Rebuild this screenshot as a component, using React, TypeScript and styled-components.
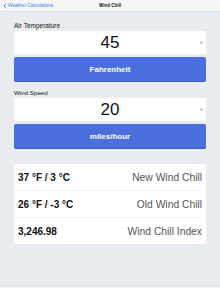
import React from "react"
import styled, { createGlobalStyle } from "styled-components"

const GlobalStyle = createGlobalStyle`
  html, body {
    margin: 0;
    padding: 0;
    background: #e9edf1;
    font-family: "Liberation Sans", Arial, sans-serif;
  }
`

const Screen = styled.div`
  width: 220px;
  height: 288px;
  display: flex;
  flex-direction: column;
  background: #e9edf1;
  overflow: hidden;
`

const NavBar = styled.header`
  height: 12px;
  flex-shrink: 0;
  display: grid;
  grid-template-columns: 1fr auto 1fr;
  align-items: center;
  background: #f7f7f8;
  border-bottom: 1px solid #dfe3e8;
  box-sizing: border-box;
`

const BackLink = styled.a`
  display: flex;
  align-items: center;
  gap: 1px;
  padding-left: 3px;
  color: #3a7cf0;
  font-size: 4.8px;
  text-decoration: none;
  white-space: nowrap;
`

const NavTitle = styled.h1`
  margin: 0;
  font-size: 4.5px;
  font-weight: bold;
  color: #111;
`

const Content = styled.main`
  flex: 1;
  display: flex;
  flex-direction: column;
  padding: 9px 14px 0;
`

const FieldLabel = styled.label<{ $first?: boolean }>`
  display: block;
  margin-top: ${(p) => (p.$first ? "0" : "7px")};
  margin-bottom: 1px;
  height: 9px;
  line-height: 9px;
  font-size: ${(p) => (p.$first ? "6.5px" : "6.2px")};
  color: #111;
`

const ValueBox = styled.div`
  position: relative;
  height: 23px;
  display: flex;
  align-items: center;
  justify-content: center;
  background: #fff;
  border-radius: 1px;
  font-size: 17px;
  color: #111;
`

const ClearDot = styled.span`
  position: absolute;
  right: 3px;
  top: 50%;
  width: 3px;
  height: 3px;
  margin-top: -1.5px;
  border-radius: 50%;
  background: #c9c9c9;
`

const UnitButton = styled.button`
  margin-top: 3px;
  height: 24px;
  border: 0;
  border-radius: 2px;
  background: #4a6fdc;
  box-shadow: 0 1px 0 #3b5cc2;
  color: #fff;
  font-family: inherit;
  font-size: 8px;
  font-weight: bold;
  padding: 0;
`

const ResultCard = styled.section`
  margin-top: 16px;
  background: #fff;
  border-radius: 2px;
  padding: 0 4px;
`

const ResultRow = styled.div`
  height: 26px;
  display: flex;
  align-items: center;
  justify-content: space-between;
  & + & {
    border-top: 1px solid #f0f1f3;
  }
`

const ResultValue = styled.span`
  font-size: 10px;
  font-weight: bold;
  color: #111;
`

const ResultName = styled.span`
  font-size: 10.3px;
  color: #555;
`

const BottomEdge = styled.div`
  height: 2px;
  flex-shrink: 0;
  border-top: 1px solid #dde2e8;
  background: #eef1f4;
`

const results = [
  { value: "37 °F / 3 °C", name: "New Wind Chill" },
  { value: "26 °F / -3 °C", name: "Old Wind Chill" },
  { value: "3,246.98", name: "Wind Chill Index" },
]

export default function App() {
  return (
    <>
      <GlobalStyle />
      <Screen>
        <NavBar>
          <BackLink href="#">
            <svg width="4" height="6" viewBox="0 0 4 6">
              <path d="M3.2 0.6 L0.9 3 L3.2 5.4" fill="none" stroke="#3a7cf0" strokeWidth="0.9" />
            </svg>
            Weather Calculations
          </BackLink>
          <NavTitle>Wind Chill</NavTitle>
          <span />
        </NavBar>
        <Content>
          <FieldLabel $first>Air Temperature</FieldLabel>
          <ValueBox>
            45
            <ClearDot />
          </ValueBox>
          <UnitButton>Fahrenheit</UnitButton>

          <FieldLabel>Wind Speed</FieldLabel>
          <ValueBox>
            20
            <ClearDot />
          </ValueBox>
          <UnitButton>miles/hour</UnitButton>

          <ResultCard>
            {results.map((r) => (
              <ResultRow key={r.name}>
                <ResultValue>{r.value}</ResultValue>
                <ResultName>{r.name}</ResultName>
              </ResultRow>
            ))}
          </ResultCard>
        </Content>
        <BottomEdge />
      </Screen>
    </>
  )
}
